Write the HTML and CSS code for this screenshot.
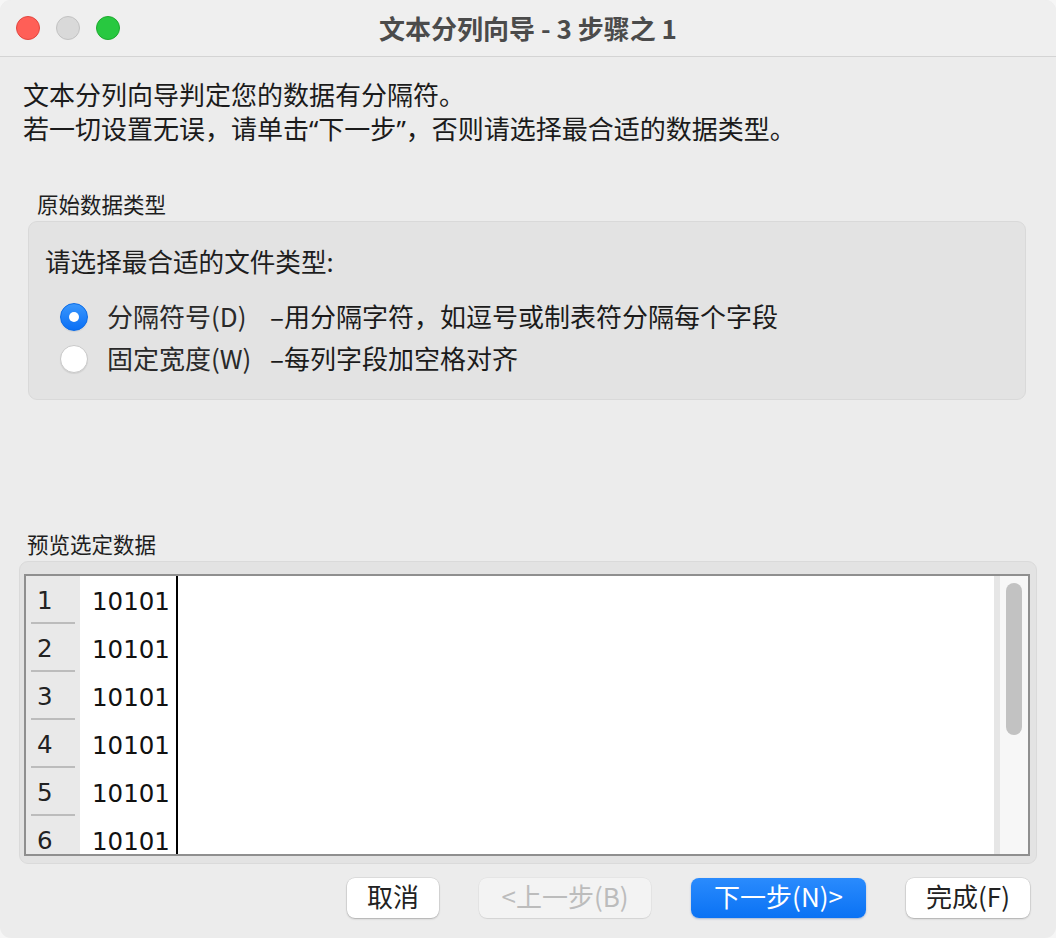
FILE: index.html
```html
<!DOCTYPE html>
<html lang="zh-CN">
<head>
<meta charset="utf-8">
<title>文本分列向导</title>
<link rel="stylesheet" href="styles.css">
</head>
<body>
<div class="window">
  <div class="titlebar">
    <div class="lights">
      <span class="light red"></span>
      <span class="light gray"></span>
      <span class="light green"></span>
    </div>
    <div class="title">文本分列向导 - 3 步骤之 1</div>
    <div></div>
  </div>
  <div class="content">
    <p class="intro">文本分列向导判定您的数据有分隔符。<br>若一切设置无误，请单击<span class="q">“</span>下一步<span class="q">”</span>，否则请选择最合适的数据类型。</p>
    <div class="section-label label-orig">原始数据类型</div>
    <div class="groupbox">
      <div class="prompt">请选择最合适的文件类型:</div>
      <div class="options">
        <div class="option"><span class="radio checked"></span><span class="opt-name">分隔符号(D)</span><span class="opt-desc">–用分隔字符，如逗号或制表符分隔每个字段</span></div>
        <div class="option"><span class="radio"></span><span class="opt-name">固定宽度(W)</span><span class="opt-desc">–每列字段加空格对齐</span></div>
      </div>
    </div>
    <div class="section-label label-preview">预览选定数据</div>
    <div class="preview-panel">
      <div class="preview-box">
        <div class="rows">
          <div class="row"><div class="num"><span class="num-in">1</span></div><div class="val">10101</div></div>
          <div class="row"><div class="num"><span class="num-in">2</span></div><div class="val">10101</div></div>
          <div class="row"><div class="num"><span class="num-in">3</span></div><div class="val">10101</div></div>
          <div class="row"><div class="num"><span class="num-in">4</span></div><div class="val">10101</div></div>
          <div class="row"><div class="num"><span class="num-in">5</span></div><div class="val">10101</div></div>
          <div class="row"><div class="num"><span class="num-in">6</span></div><div class="val">10101</div></div>
        </div>
        <div class="blank"></div>
        <div class="strip"></div>
        <div class="scroll"><div class="thumb"></div></div>
      </div>
    </div>
    <div class="buttons">
      <button class="btn btn-cancel">取消</button>
      <button class="btn btn-prev" disabled>&lt;上一步(B)</button>
      <button class="btn btn-next">下一步(N)&gt;</button>
      <button class="btn btn-finish">完成(F)</button>
    </div>
  </div>
</div>
</body>
</html>
```
FILE: styles.css
```css
html, body {
  margin: 0;
  padding: 0;
  background: #f6f6f6;
}

body {
  font-family: "Noto Sans CJK SC", "Noto Sans", sans-serif;
  color: #1e1e1e;
}

.window {
  width: 1056px;
  height: 938px;
  background: #ececec;
  border-radius: 11px;
  overflow: hidden;
  display: flex;
  flex-direction: column;
}

.titlebar {
  height: 56px;
  flex: none;
  background: #efefef;
  border-bottom: 1px solid #d4d4d4;
  display: grid;
  grid-template-columns: 1fr auto 1fr;
  align-items: center;
}

.lights {
  display: flex;
  gap: 16px;
  padding-left: 16px;
}

.light {
  width: 24px;
  height: 24px;
  border-radius: 50%;
  box-sizing: border-box;
}

.light.red { background: #ff5f57; border: 1px solid #e2463f; }
.light.gray { background: #d9d9d9; border: 1px solid #c2c2c2; }
.light.green { background: #28c840; border: 1px solid #1daa2e; }

.title {
  font-size: 26px;
  line-height: 34px;
  font-weight: 700;
  color: #4b4b4b;
  padding-bottom: 1px;
}

.content {
  padding-top: 20px;
  display: flex;
  flex-direction: column;
}

.intro {
  margin: 0 0 0 23px;
  font-size: 26px;
  line-height: 34px;
  color: #1b1b1b;
}

.q {
  font-family: "Noto Sans", sans-serif;
}

.section-label {
  font-size: 21.5px;
  line-height: 28px;
  color: #1e1e1e;
}

.label-orig {
  margin: 44px 0 0 37px;
}

.groupbox {
  margin: 3px 30px 0 28px;
  background: #e3e3e3;
  border: 1px solid #d9d9d9;
  border-radius: 9px;
  padding: 22px 16px 19px 16px;
}

.prompt {
  font-size: 25.6px;
  line-height: 34px;
}

.options {
  margin-top: 18px;
}

.option {
  display: flex;
  align-items: center;
  height: 42px;
  padding-left: 15px;
  font-size: 26px;
}

.opt-name, .opt-desc {
  margin-top: -3px;
}

.radio {
  width: 28px;
  height: 28px;
  border-radius: 50%;
  box-sizing: border-box;
  margin-right: 19px;
  background: #ffffff;
  border: 1px solid #c9c9c9;
  box-shadow: 0 1px 1px rgba(0, 0, 0, 0.08);
  display: flex;
  align-items: center;
  justify-content: center;
  flex: none;
}

.radio.checked {
  background: linear-gradient(#3a97fd, #0a6ff5);
  border: 1px solid #0a6ae6;
}

.radio.checked::after {
  content: "";
  width: 10px;
  height: 10px;
  border-radius: 50%;
  background: #ffffff;
}

.opt-name {
  width: 163px;
  flex: none;
  color: #2a2a2a;
}

.opt-desc {
  color: #1b1b1b;
}

.label-preview {
  margin: 130px 0 0 27px;
}

.preview-panel {
  margin: 3px 19px 0 19px;
  background: #e3e3e3;
  border: 1px solid #dadada;
  border-radius: 9px;
  padding: 12px 6px 7px 4px;
}

.preview-box {
  border: 2px solid #8f8f8f;
  height: 278px;
  background: #ffffff;
  display: flex;
  overflow: hidden;
}

.rows {
  display: flex;
  flex-direction: column;
  flex: none;
}

.row {
  display: flex;
  height: 48px;
  flex: none;
}

.num {
  width: 54px;
  box-sizing: border-box;
  padding: 0 5px;
  background: #e9e9e9;
}

.num-in {
  display: block;
  height: 48px;
  box-sizing: border-box;
  border-bottom: 2px solid #bcbcbc;
  padding: 3px 0 0 6px;
  font-family: "DejaVu Sans", sans-serif;
  font-size: 24.5px;
  line-height: 43px;
  color: #222222;
}

.val {
  box-sizing: border-box;
  padding: 3px 0 0 12px;
  border-right: 2px solid #000000;
  width: 98px;
  font-family: "DejaVu Sans", sans-serif;
  font-size: 24.5px;
  line-height: 45px;
  color: #111111;
}

.blank {
  flex: 1;
  background: #ffffff;
}

.strip {
  width: 6px;
  flex: none;
  background: #e6e6e6;
}

.scroll {
  width: 28px;
  flex: none;
  background: #f7f7f7;
}

.thumb {
  margin: 7px 0 0 6px;
  width: 16px;
  height: 152px;
  border-radius: 8px;
  background: #c2c2c2;
}

.buttons {
  margin-top: 14px;
  padding-right: 26px;
  display: flex;
  justify-content: flex-end;
  gap: 40px;
}

.btn {
  height: 40px;
  padding: 0 0 4px 0;
  border: none;
  border-radius: 8px;
  font-family: "Noto Sans CJK SC", "Noto Sans", sans-serif;
  font-size: 26px;
  line-height: 36px;
  color: #222222;
  background: #ffffff;
  box-shadow: 0 0 0 0.5px rgba(0, 0, 0, 0.12), 0 1px 2px rgba(0, 0, 0, 0.22);
}

.btn-cancel { width: 92px; }
.btn-prev {
  width: 172px;
  background: #f3f3f3;
  color: #bcbcbc;
  box-shadow: 0 0 0 0.5px rgba(0, 0, 0, 0.06), 0 1px 1px rgba(0, 0, 0, 0.08);
}
.btn-next {
  width: 175px;
  color: #ffffff;
  background: linear-gradient(#2a8bfd, #0a72f4);
  box-shadow: 0 1px 2px rgba(0, 60, 160, 0.3);
}
.btn-finish { width: 124px; }
```
